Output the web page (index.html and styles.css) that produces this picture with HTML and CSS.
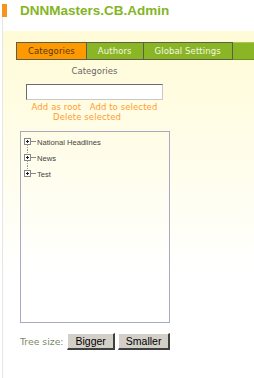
FILE: index.html
```html
<!DOCTYPE html>
<html lang="en">
<head>
    <meta charset="UTF-8">
    <meta name="viewport" content="width=device-width, initial-scale=1.0">
    <title>DNNMasters.CB.Admin</title>
    <link rel="stylesheet" href="styles.css">
</head>
<body>

<div class="page">
    <h1 class="title">DNNMasters.CB.Admin</h1>

    <div class="panel">
        <div class="tabs">
            <span class="tab active">Categories</span>
            <span class="tab">Authors</span>
            <span class="tab">Global Settings</span>
        </div>

        <div class="editor">
            <div class="label">Categories</div>
            <input class="name-input" type="text">
            <div class="actions">
                <a href="#">Add as root</a>&nbsp;&nbsp; <a href="#">Add to selected</a><br>
                <a href="#" class="delete">Delete selected</a>
            </div>
        </div>

        <div class="tree">
            <div class="node">
                <svg class="expander" width="13" height="16" viewBox="0 0 13 16">
                    <line x1="3.5" y1="11" x2="3.5" y2="16" stroke="#999" stroke-dasharray="1 1"/>
                    <line x1="7" y1="7.5" x2="12" y2="7.5" stroke="#888"/>
                    <rect x="0.5" y="4.5" width="6" height="6" fill="#fff" stroke="#888"/>
                    <line x1="2" y1="7.5" x2="5" y2="7.5" stroke="#222"/>
                    <line x1="3.5" y1="6" x2="3.5" y2="9" stroke="#222"/>
                </svg>
                <span>National Headlines</span>
            </div>
            <div class="node">
                <svg class="expander" width="13" height="16" viewBox="0 0 13 16">
                    <line x1="3.5" y1="0" x2="3.5" y2="4" stroke="#999" stroke-dasharray="1 1"/>
                    <line x1="3.5" y1="11" x2="3.5" y2="16" stroke="#999" stroke-dasharray="1 1"/>
                    <line x1="7" y1="7.5" x2="12" y2="7.5" stroke="#888"/>
                    <rect x="0.5" y="4.5" width="6" height="6" fill="#fff" stroke="#888"/>
                    <line x1="2" y1="7.5" x2="5" y2="7.5" stroke="#222"/>
                    <line x1="3.5" y1="6" x2="3.5" y2="9" stroke="#222"/>
                </svg>
                <span>News</span>
            </div>
            <div class="node">
                <svg class="expander" width="13" height="16" viewBox="0 0 13 16">
                    <line x1="3.5" y1="0" x2="3.5" y2="4" stroke="#999" stroke-dasharray="1 1"/>
                    <line x1="7" y1="7.5" x2="12" y2="7.5" stroke="#888"/>
                    <rect x="0.5" y="4.5" width="6" height="6" fill="#fff" stroke="#888"/>
                    <line x1="2" y1="7.5" x2="5" y2="7.5" stroke="#222"/>
                    <line x1="3.5" y1="6" x2="3.5" y2="9" stroke="#222"/>
                </svg>
                <span>Test</span>
            </div>
        </div>

        <div class="size-row">
            <span class="size-label">Tree size:</span>
            <button class="size-btn">Bigger</button>
            <button class="size-btn">Smaller</button>
        </div>
    </div>
</div>

</body>
</html>
```

FILE: styles.css
```css
html, body {
    height: 100%;
}
body {
    margin: 0;
    background-color: #fff;
    font-family: "DejaVu Sans", Verdana, sans-serif;
    overflow: hidden;
}
.page {
    margin-left: 2px;
    min-height: 100%;
    border-left: 1px solid #e6e6e6;
}
.title {
    margin: 0 0 0 -1px;
    padding: 0 0 0 13px;
    margin-top: 4px;
    height: 13px;
    border-left: 5px solid #f7941d;
    font-family: "Liberation Sans", Arial, sans-serif;
    font-size: 13.5px;
    font-weight: bold;
    line-height: 13px;
    color: #84b526;
}
.panel {
    margin-top: 14px;
    padding-top: 11px;
    min-height: 330px;
    background: linear-gradient(#fffbd7 0, #fffde9 120px, #fff 240px);
}
.tabs {
    display: flex;
    margin-left: 13px;
    height: 16px;
    background-color: #8ab524;
    border-top: 1px solid #a6c75a;
    border-bottom: 1px solid #6f8f20;
}
.tab {
    padding: 0 11px;
    margin-top: -1px;
    margin-bottom: -1px;
    border: 1px solid #5e5e4e;
    border-left: none;
    font-size: 8.5px;
    line-height: 16px;
    color: #f4f8e6;
    letter-spacing: 0.1px;
}
.tab.active {
    border-left: 1px solid #5e5e4e;
    background-color: #ff9900;
    color: #553a12;
}
.editor {
    margin-left: 23px;
    width: 137px;
    text-align: center;
}
.label {
    margin-top: 6px;
    font-size: 8.5px;
    line-height: 10px;
    color: #666;
}
.name-input {
    display: block;
    box-sizing: border-box;
    width: 137px;
    height: 16px;
    margin: 8px 0 2px;
    padding: 0;
    border: 1px solid #c8c8c8;
    border-top-color: #6b6b6b;
    border-left-color: #6b6b6b;
    background-color: #fff;
}
.actions {
    font-size: 8.5px;
    line-height: 10px;
    letter-spacing: 0.1px;
}
.actions a {
    color: #ff9c33;
    text-decoration: none;
}
.actions .delete {
    margin-right: 15px;
}
.tree {
    box-sizing: border-box;
    margin: 9px 0 0 17px;
    width: 150px;
    height: 192px;
    padding: 2px 0 0 3px;
    border: 1px solid #a9a9c4;
}
.node {
    display: flex;
    align-items: center;
    height: 16px;
    font-family: "Liberation Sans", Tahoma, sans-serif;
    font-size: 7.6px;
    color: #444;
}
.expander {
    display: block;
    flex-shrink: 0;
}
.size-row {
    display: flex;
    align-items: center;
    gap: 3px;
    margin: 10px 0 0 17px;
}
.size-label {
    margin-right: 1px;
    font-size: 9.3px;
    color: #7b8a63;
}
.size-btn {
    height: 17px;
    padding: 0 7px;
    border: 2px solid;
    border-color: #fff #404040 #404040 #fff;
    border-width: 1px 2px 2px 1px;
    background-color: #d4d0c8;
    font-family: "Liberation Sans", Arial, sans-serif;
    font-size: 10.5px;
    color: #000;
}
```
